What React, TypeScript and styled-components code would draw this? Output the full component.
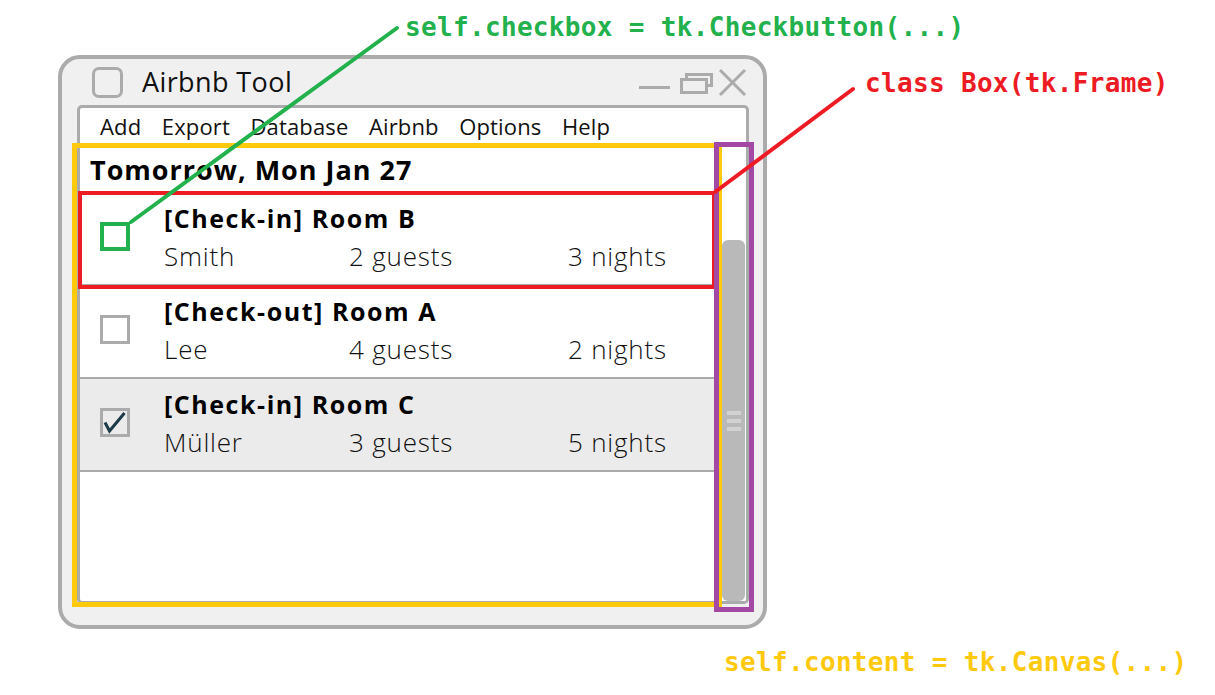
import React from "react";
import styled, { createGlobalStyle } from "styled-components";

const GlobalStyle = createGlobalStyle`
  html, body { margin: 0; padding: 0; background: #fff; }
  body { font-family: "Open Sans", "Noto Sans", sans-serif; }
`;

const Page = styled.div`
  position: relative;
  width: 1215px;
  height: 695px;
  overflow: hidden;
  background: #fff;
  padding: 55px 0 0 58px;
  box-sizing: border-box;
`;

const Window = styled.div`
  box-sizing: border-box;
  width: 709px;
  height: 574px;
  border: 4px solid #ababab;
  border-radius: 22px;
  background: #f0f0f0;
  display: flex;
  flex-direction: column;
  padding: 0 14px 21px 15px;
`;

const TitleBar = styled.div`
  height: 46px;
  flex: none;
  display: flex;
  align-items: center;
  padding: 0 2px 0 15px;
`;

const AppIcon = styled.div`
  box-sizing: border-box;
  width: 31px;
  height: 31px;
  border: 3px solid #ababab;
  border-radius: 7px;
`;

const Title = styled.div`
  margin-left: 19px;
  margin-bottom: 2px;
  font-size: 27px;
  letter-spacing: 0.4px;
  color: #111;
  line-height: 1;
`;

const Controls = styled.svg`
  margin-left: auto;
  display: block;
`;

const Panel = styled.div`
  flex: 1;
  box-sizing: border-box;
  border: 3px solid #ababab;
  border-radius: 5px;
  background: #fff;
  display: flex;
  flex-direction: column;
  overflow: hidden;
`;

const MenuBar = styled.div`
  height: 35px;
  flex: none;
  display: flex;
  align-items: center;
  gap: 20.5px;
  padding-left: 20px;
  border-bottom: 2px solid #ababab;
  font-size: 22px;
  letter-spacing: 0.15px;
  color: #111;
`;

const MenuItem = styled.span`
  line-height: 1;
`;

const Body = styled.div`
  flex: 1;
  display: flex;
  min-height: 0;
`;

const Content = styled.div`
  flex: 1;
  display: flex;
  flex-direction: column;
`;

const DayHeader = styled.div`
  height: 48px;
  flex: none;
  display: flex;
  align-items: center;
  padding-left: 10px;
  font-size: 27px;
  letter-spacing: 1px;
  font-weight: 700;
  color: #000;
`;

const Row = styled.div<{ $shaded?: boolean }>`
  height: 91px;
  flex: none;
  display: flex;
  align-items: flex-start;
  padding-left: 20px;
  border-bottom: 2px solid #ababab;
  background: ${(p) => (p.$shaded ? "#ebebeb" : "#fff")};
`;

const Check = styled.div<{ $highlight?: boolean }>`
  box-sizing: border-box;
  width: 30px;
  height: 29px;
  margin-top: 29px;
  border: ${(p) => (p.$highlight ? "4px solid #22b14c" : "3px solid #ababab")};
  display: flex;
  align-items: center;
  justify-content: center;
`;

const Info = styled.div`
  margin-left: 34px;
  padding-top: 9px;
  display: flex;
  flex-direction: column;
`;

const RowTitle = styled.div`
  font-size: 25px;
  font-weight: 700;
  letter-spacing: 1.55px;
  line-height: 32px;
  color: #000;
`;

const RowMeta = styled.div`
  margin-top: 6px;
  display: grid;
  grid-template-columns: 185px 219px auto;
  font-size: 26px;
  font-weight: 300;
  letter-spacing: 0.8px;
  line-height: 32px;
  color: #111;
`;

const ScrollTrack = styled.div`
  width: 26px;
  flex: none;
  display: flex;
  flex-direction: column;
  background: #fff;
  padding: 95px 1px 0 2px;
  box-sizing: border-box;
`;

const Thumb = styled.div`
  flex: 1;
  border-radius: 6px;
  background: #b9b9b9;
  display: flex;
  flex-direction: column;
  align-items: center;
  justify-content: center;
  gap: 4px;
`;

const Grip = styled.div`
  width: 14px;
  height: 4px;
  background: #d2d2d2;
`;

const Frame = styled.div<{ $color: string; $w: number }>`
  position: absolute;
  box-sizing: border-box;
  border: ${(p) => p.$w}px solid ${(p) => p.$color};
  pointer-events: none;
`;

const Lines = styled.svg`
  position: absolute;
  left: 0;
  top: 0;
  pointer-events: none;
`;

const Label = styled.div<{ $color: string }>`
  position: absolute;
  font-family: "DejaVu Sans Mono", "Liberation Mono", monospace;
  font-weight: 700;
  font-size: 26px;
  letter-spacing: 0.33px;
  line-height: 30px;
  white-space: nowrap;
  color: ${(p) => p.$color};
`;

type Booking = {
  title: string;
  name: string;
  guests: string;
  nights: string;
  checked?: boolean;
  shaded?: boolean;
  highlight?: boolean;
};

const bookings: Booking[] = [
  { title: "[Check-in] Room B", name: "Smith", guests: "2 guests", nights: "3 nights", highlight: true },
  { title: "[Check-out] Room A", name: "Lee", guests: "4 guests", nights: "2 nights" },
  { title: "[Check-in] Room C", name: "Müller", guests: "3 guests", nights: "5 nights", checked: true, shaded: true },
];

const GREEN = "#22b14c";
const RED = "#ed1c24";
const YELLOW = "#ffc90e";
const PURPLE = "#a349a4";

export default function App() {
  return (
    <>
      <GlobalStyle />
      <Page>
        <Window>
          <TitleBar>
            <AppIcon />
            <Title>Airbnb Tool</Title>
            <Controls width="108" height="30" viewBox="0 0 108 30">
              <g stroke="#ababab" strokeWidth="3" fill="none">
                <line x1="0" y1="20.5" x2="31" y2="20.5" />
                <rect x="47.5" y="7.5" width="25" height="11" />
                <rect x="42.5" y="12.5" width="25" height="13" fill="#f0f0f0" />
                <line x1="81" y1="3" x2="106" y2="28" />
                <line x1="106" y1="3" x2="81" y2="28" />
              </g>
            </Controls>
          </TitleBar>
          <Panel>
            <MenuBar>
              {["Add", "Export", "Database", "Airbnb", "Options", "Help"].map((m) => (
                <MenuItem key={m}>{m}</MenuItem>
              ))}
            </MenuBar>
            <Body>
              <Content>
                <DayHeader>Tomorrow, Mon Jan 27</DayHeader>
                {bookings.map((b) => (
                  <Row key={b.title} $shaded={b.shaded}>
                    <Check $highlight={b.highlight}>
                      {b.checked && (
                        <svg width="24" height="23" viewBox="0 0 24 23">
                          <path d="M2 11.5 L6.5 20 L21.5 2" stroke="#1c3a47" strokeWidth="3" fill="none" />
                        </svg>
                      )}
                    </Check>
                    <Info>
                      <RowTitle>{b.title}</RowTitle>
                      <RowMeta>
                        <span>{b.name}</span>
                        <span>{b.guests}</span>
                        <span>{b.nights}</span>
                      </RowMeta>
                    </Info>
                  </Row>
                ))}
              </Content>
              <ScrollTrack>
                <Thumb>
                  <Grip />
                  <Grip />
                  <Grip />
                </Thumb>
              </ScrollTrack>
            </Body>
          </Panel>
        </Window>

        <Frame $color={YELLOW} $w={5} style={{ left: 72, top: 143, width: 650, height: 464 }} />
        <Frame $color={RED} $w={4} style={{ left: 78, top: 191, width: 638, height: 98 }} />
        <Frame $color={PURPLE} $w={5} style={{ left: 714, top: 142, width: 40, height: 470 }} />

        <Lines width="1215" height="695" viewBox="0 0 1215 695">
          <line x1="131" y1="222" x2="397" y2="28" stroke={GREEN} strokeWidth="4" strokeLinecap="round" />
          <line x1="715" y1="192" x2="853" y2="89" stroke={RED} strokeWidth="4" strokeLinecap="round" />
        </Lines>

        <Label $color={GREEN} style={{ left: 405, top: 12 }}>self.checkbox = tk.Checkbutton(...)</Label>
        <Label $color={RED} style={{ left: 865, top: 68 }}>class Box(tk.Frame)</Label>
        <Label $color={YELLOW} style={{ left: 724, top: 647 }}>self.content = tk.Canvas(...)</Label>
      </Page>
    </>
  );
}
